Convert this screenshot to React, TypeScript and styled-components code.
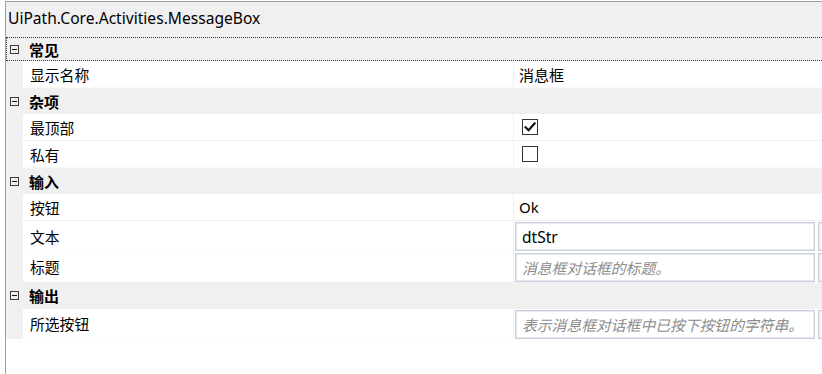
import React from "react";
import styled, { createGlobalStyle } from "styled-components";

const Global = createGlobalStyle`
  html, body { margin: 0; padding: 0; background: #ffffff; overflow: hidden; }
  body { font-family: "Noto Sans", "Noto Sans CJK SC", sans-serif; }
  #root { height: 374px; }
`;

const Page = styled.div`
  height: 374px;
  padding-top: 1px;
  padding-left: 5px;
  box-sizing: border-box;
`;

const Panel = styled.div`
  height: 100%;
  border-top: 1px solid #a0a0a0;
  border-left: 1px solid #a0a0a0;
  display: flex;
  flex-direction: column;
  overflow: hidden;
`;

const TitleBar = styled.div`
  height: 35px;
  box-sizing: border-box;
  background: #f0f0f0;
  padding-left: 2px;
  padding-top: 5px;
  line-height: 22px;
  font-family: "Noto Sans", sans-serif;
  font-size: 15.6px;
  color: #000;
`;

const Grid = styled.div`
  display: flex;
  flex-direction: column;
`;

const CategoryRow = styled.div<{ $focused?: boolean; $h: number }>`
  height: ${(p) => p.$h}px;
  box-sizing: border-box;
  background: #f0f0f0;
  display: flex;
  align-items: center;
  border: 1px dotted ${(p) => (p.$focused ? "#3a3a3a" : "transparent")};
  border-right: none;
  font-family: "Noto Sans CJK SC", sans-serif;
  font-weight: 700;
  font-size: 15px;
  color: #000;
`;

const Toggle = styled.span`
  width: 9px;
  height: 9px;
  box-sizing: border-box;
  border: 1px solid #3c3c3c;
  margin-left: 3px;
  margin-right: 10px;
  position: relative;
  flex: none;
  &::after {
    content: "";
    position: absolute;
    left: 1px;
    right: 1px;
    top: 3px;
    height: 1px;
    background: #1a1a1a;
  }
`;

const PropRow = styled.div<{ $h: number }>`
  height: ${(p) => p.$h}px;
  display: flex;
  background: #f0f0f0;
  box-sizing: border-box;
  padding-left: 17px;
`;

const NameCell = styled.div<{ $sep?: boolean }>`
  width: 490px;
  flex: none;
  background: #fff;
  display: flex;
  align-items: center;
  padding-left: 7px;
  box-sizing: border-box;
  border-bottom: 1px solid ${(p) => (p.$sep ? "#f0f0f0" : "#fafafa")};
  font-family: "Noto Sans CJK SC", sans-serif;
  font-size: 14.8px;
  color: #000;
`;

const ValueCell = styled.div<{ $sep?: boolean }>`
  flex: 1;
  background: #fff;
  display: flex;
  align-items: center;
  border-left: 1px solid #f0f0f0;
  border-bottom: 1px solid ${(p) => (p.$sep ? "#f0f0f0" : "#fafafa")};
  padding-left: 5px;
  box-sizing: border-box;
  font-family: "Noto Sans", "Noto Sans CJK SC", sans-serif;
  font-size: 15px;
  color: #000;
  min-width: 0;
`;

const BoxCell = styled.div`
  flex: 1;
  background: #fff;
  display: flex;
  align-items: center;
  gap: 3px;
  border-left: 1px solid #f0f0f0;
  padding-left: 1px;
  box-sizing: border-box;
  min-width: 0;
`;

const TextBox = styled.div<{ $placeholder?: boolean }>`
  width: 300px;
  height: 29px;
  flex: none;
  box-sizing: border-box;
  border: 1px solid #c9d0dc;
  box-shadow: inset 0 0 0 1px #e6e9ef;
  background: #fff;
  display: flex;
  align-items: center;
  padding-left: 6px;
  font-family: "Noto Sans", "Noto Sans CJK SC", sans-serif;
  font-size: ${(p) => (p.$placeholder ? "14.8px" : "15.5px")};
  color: ${(p) => (p.$placeholder ? "#8c8c8c" : "#000")};
  font-style: ${(p) => (p.$placeholder ? "italic" : "normal")};
  white-space: nowrap;
  overflow: hidden;
`;

const EllipsisButton = styled.div`
  width: 24px;
  height: 29px;
  flex: none;
  box-sizing: border-box;
  border: 1px solid #c9d0dc;
  box-shadow: inset 0 0 0 1px #e6e9ef;
  background: #f7f7f7;
`;

const Check = styled.span`
  width: 16px;
  height: 16px;
  box-sizing: border-box;
  border: 1px solid #333;
  background: #fff;
  margin-left: 3px;
  display: flex;
  align-items: center;
  justify-content: center;
`;

const Spacer = styled.div`
  flex: 1;
  background: #fff;
`;

type Item =
  | { kind: "cat"; label: string; h: number; focused?: boolean }
  | { kind: "text"; label: string; value: string; h: number; sep?: boolean }
  | { kind: "check"; label: string; checked: boolean; h: number; sep?: boolean }
  | { kind: "box"; label: string; value: string; placeholder?: boolean; h: number };

const items: Item[] = [
  { kind: "cat", label: "常见", h: 24, focused: true },
  { kind: "text", label: "显示名称", value: "消息框", h: 27 },
  { kind: "cat", label: "杂项", h: 26 },
  { kind: "check", label: "最顶部", checked: true, h: 27, sep: true },
  { kind: "check", label: "私有", checked: false, h: 27 },
  { kind: "cat", label: "输入", h: 26 },
  { kind: "text", label: "按钮", value: "Ok", h: 27, sep: true },
  { kind: "box", label: "文本", value: "dtStr", h: 31 },
  { kind: "box", label: "标题", value: "消息框对话框的标题。", placeholder: true, h: 30 },
  { kind: "cat", label: "输出", h: 27 },
  { kind: "box", label: "所选按钮", value: "表示消息框对话框中已按下按钮的字符串。", placeholder: true, h: 30 },
];

const CheckMark = () => (
  <svg width="12" height="10" viewBox="0 0 12 10">
    <path d="M1.5 5.2 L4.6 8.2 L10.6 1.4" fill="none" stroke="#111" strokeWidth="2.2" strokeLinecap="square" />
  </svg>
);

export default function App() {
  return (
    <>
      <Global />
      <Page>
        <Panel>
          <TitleBar>UiPath.Core.Activities.MessageBox</TitleBar>
          <Grid>
            {items.map((it, i) => {
              if (it.kind === "cat")
                return (
                  <CategoryRow key={i} $h={it.h} $focused={it.focused}>
                    <Toggle />
                    {it.label}
                  </CategoryRow>
                );
              if (it.kind === "text")
                return (
                  <PropRow key={i} $h={it.h}>
                    <NameCell $sep={it.sep}>{it.label}</NameCell>
                    <ValueCell $sep={it.sep}>{it.value}</ValueCell>
                  </PropRow>
                );
              if (it.kind === "check")
                return (
                  <PropRow key={i} $h={it.h}>
                    <NameCell $sep={it.sep}>{it.label}</NameCell>
                    <ValueCell $sep={it.sep}>
                      <Check>{it.checked && <CheckMark />}</Check>
                    </ValueCell>
                  </PropRow>
                );
              return (
                <PropRow key={i} $h={it.h}>
                  <NameCell>{it.label}</NameCell>
                  <BoxCell>
                    <TextBox $placeholder={it.placeholder}>{it.value}</TextBox>
                    <EllipsisButton />
                  </BoxCell>
                </PropRow>
              );
            })}
          </Grid>
          <Spacer />
        </Panel>
      </Page>
    </>
  );
}
